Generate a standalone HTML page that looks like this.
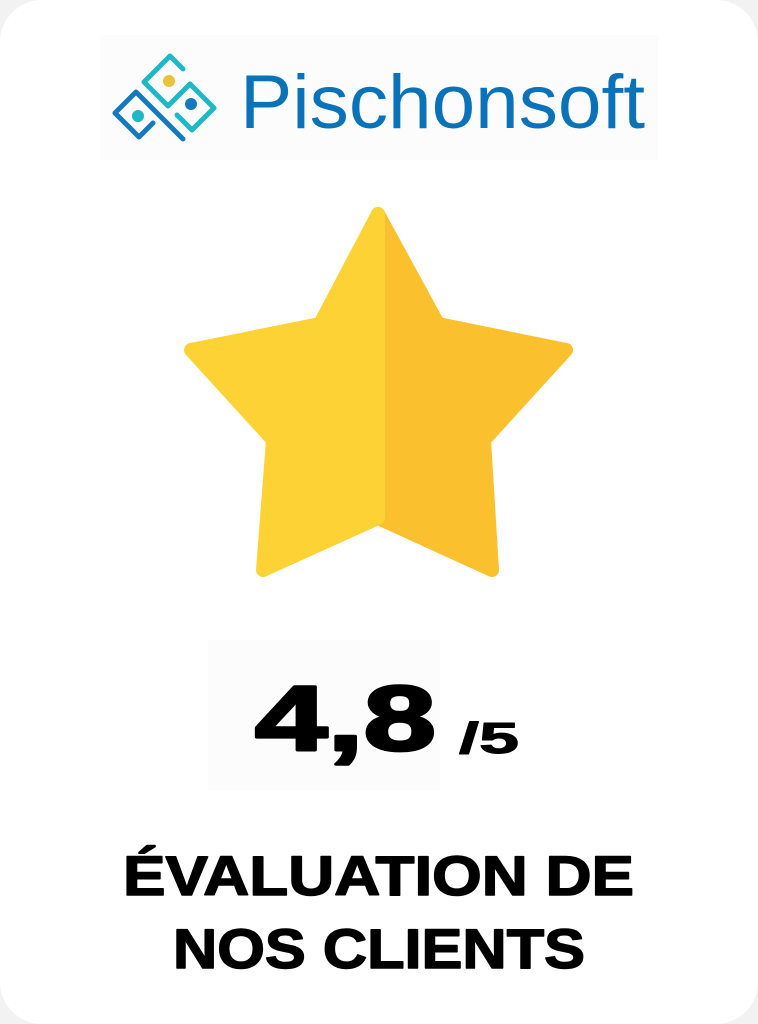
<!DOCTYPE html>
<html><head><meta charset="utf-8"><style>
html,body{margin:0;padding:0;background:#f2f2f2;}
.card{position:absolute;left:0;top:0;width:758px;height:1024px;background:#fff;border-radius:42px;}
svg{position:absolute;left:0;top:0;}
</style></head><body>
<div class="card"></div>
<svg width="758" height="1024" viewBox="0 0 758 1024">
  <rect x="100" y="35" width="558" height="125" fill="#fcfcfc"/>
  <g fill="none" stroke-width="5" stroke-linecap="round" stroke-linejoin="round">
    <path d="M170 56 L183 69 M170 56 L144 82 L168 106 L190 84" stroke="#20b7c6"/>
    <path d="M190 84 L214 108 L192 130 L177 115" stroke="#20b7c6"/>
    <path d="M136 92 L115 113 L139 137 L153 123 M136 92 L183 139" stroke="#1479bf"/>
  </g>
  <circle cx="169" cy="81" r="6" fill="#e9c23a"/>
  <circle cx="191" cy="104" r="6" fill="#1479bf"/>
  <circle cx="138" cy="116" r="6" fill="#20b7c6"/>
  <text x="240" y="128" font-family="Liberation Sans, sans-serif" font-size="76" fill="#0a72b9" textLength="405" lengthAdjust="spacingAndGlyphs">Pischonsoft</text>
  <path d="M378 214 L438 324 L566 350 L484 440 L492 570 L378 518 Z" fill="#fbc02d" stroke="#fbc02d" stroke-width="14" stroke-linejoin="round"/>
  <path d="M378 214 L320 324 L191 350 L273 440 L263 570 L378 518 Z" fill="#fdd235" stroke="#fdd235" stroke-width="14" stroke-linejoin="round"/>
  <rect x="208" y="640" width="232" height="150" fill="#fcfcfc"/>
  <g stroke="#000" stroke-linejoin="round">
  <text x="255" y="750" font-family="Liberation Sans, sans-serif" font-weight="bold" font-size="92" fill="#000" stroke-width="3" textLength="181" lengthAdjust="spacingAndGlyphs">4,8</text>
  <text x="459" y="753" font-family="Liberation Sans, sans-serif" font-weight="bold" font-size="44" fill="#000" stroke-width="1" textLength="60" lengthAdjust="spacingAndGlyphs">/5</text>
  <text x="123" y="895" font-family="Liberation Sans, sans-serif" font-weight="bold" font-size="56" fill="#000" stroke-width="1.5" textLength="511" lengthAdjust="spacingAndGlyphs">ÉVALUATION DE</text>
  <text x="173" y="968" font-family="Liberation Sans, sans-serif" font-weight="bold" font-size="56" fill="#000" stroke-width="1.5" textLength="412" lengthAdjust="spacingAndGlyphs">NOS CLIENTS</text>
  </g>
</svg>
</body></html>
